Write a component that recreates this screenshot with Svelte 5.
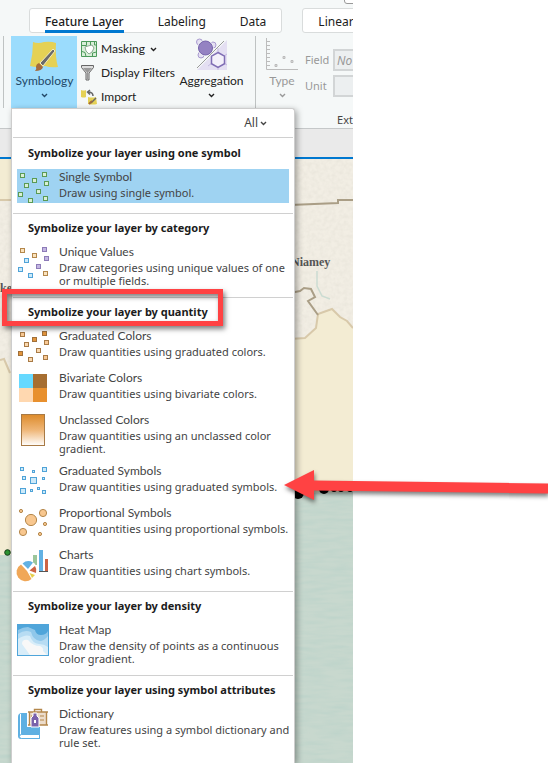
<script>
  const dots = [[5, 5], [27, 4], [17, 10], [29, 13], [9, 15], [21, 21], [3, 24], [28, 28], [13, 30]];
  const green = dots.map(() => ['#5a9a54', '#d9efd5']);
  const tan = ['#b4874b', '#fbe3bd'];
  const violet = ['#8d7bb8', '#c3b6e2'];
  const blue = ['#4fa3d8', '#cdeaf9'];
  const light = ['#a87a45', '#fbd9b0'];
  const mid = ['#a87a45', '#f9c995'];
  const dark = ['#a0703a', '#e3953d'];
  const dotColors = {
    single: green,
    unique: [tan, violet, tan, violet, blue, violet, blue, tan, blue],
    graduated: [mid, dark, dark, mid, light, light, dark, mid, light]
  };
  const squares = [[3, 2, 3], [15, 5, 2], [25, 2, 4], [5, 11, 3], [13, 12, 6], [25, 12, 2], [3, 23, 5], [13, 24, 2], [20, 22, 2], [25, 25, 3]];
  const circles = [[4, 4, 1.6], [26, 6, 3.6], [14, 13, 5.6], [28, 17, 1.6], [6, 25, 3.6], [23, 27, 1.6]];

  const sections = [
    { title: 'Symbolize your layer using one symbol', items: [
      { icon: 'single', name: 'Single Symbol', text: 'Draw using single symbol.', selected: true }
    ] },
    { title: 'Symbolize your layer by category', items: [
      { icon: 'unique', name: 'Unique Values', text: 'Draw categories using unique values of one or multiple fields.' }
    ] },
    { title: 'Symbolize your layer by quantity', items: [
      { icon: 'graduated', name: 'Graduated Colors', text: 'Draw quantities using graduated colors.' },
      { icon: 'bivariate', name: 'Bivariate Colors', text: 'Draw quantities using bivariate colors.' },
      { icon: 'unclassed', name: 'Unclassed Colors', text: 'Draw quantities using an unclassed color gradient.' },
      { icon: 'symbols', name: 'Graduated Symbols', text: 'Draw quantities using graduated symbols.' },
      { icon: 'proportional', name: 'Proportional Symbols', text: 'Draw quantities using proportional symbols.' },
      { icon: 'charts', name: 'Charts', text: 'Draw quantities using chart symbols.' }
    ] },
    { title: 'Symbolize your layer by density', items: [
      { icon: 'heat', name: 'Heat Map', text: 'Draw the density of points as a continuous color gradient.' }
    ] },
    { title: 'Symbolize your layer using symbol attributes', items: [
      { icon: 'dictionary', name: 'Dictionary', text: 'Draw features using a symbol dictionary and rule set.' }
    ] }
  ];
</script>

{#snippet chevron()}
  <svg class="chevron" viewBox="0 0 7 5" width="7" height="5"><path d="M1 1l2.5 2.5L6 1" fill="none" stroke="currentColor" stroke-width="1.4" /></svg>
{/snippet}

{#snippet itemIcon(kind)}
  <svg class="icon" viewBox="0 0 32 32" width="32" height="32">
    {#if dotColors[kind]}
      {#each dots as [x, y], i}
        <rect x={x - 1.5} y={y - 2.5} width="4" height="4" fill={dotColors[kind][i][1]} stroke={dotColors[kind][i][0]} />
      {/each}
    {:else if kind === 'bivariate'}
      <path fill="#66d9ff" d="M2 2h14v14H2z" /><path fill="#a66e31" d="M16 2h14v14H16z" />
      <path fill="#ffd8b0" d="M2 16h14v14H2z" /><path fill="#e8902e" d="M16 16h14v14H16z" />
    {:else if kind === 'unclassed'}
      <defs><linearGradient id="fade" x2="0" y2="1"><stop stop-color="#dd8b2b" /><stop offset=".5" stop-color="#efb677" /><stop offset="1" stop-color="#fff" /></linearGradient></defs>
      <rect x="4.5" y="0.5" width="23" height="31" fill="url(#fade)" stroke="#a87a45" />
    {:else if kind === 'symbols'}
      {#each squares as [x, y, s]}
        <rect x={x + 0.5} y={y + 0.5} width={s} height={s} fill="#cdeaf9" stroke="#4fa3d8" />
      {/each}
    {:else if kind === 'proportional'}
      {#each circles as [x, y, r]}
        <circle cx={x} cy={y} {r} fill="#f8c78f" stroke="#b4874b" stroke-width="1" />
      {/each}
    {:else if kind === 'charts'}
      <path fill="#9cc69b" d="M16 6h4v10h-4z" /><path fill="#62b1e3" d="M22 1h4v21h-4z" /><path fill="#cd6444" d="M28 10h3v12h-3z" />
      <path d="M22 22.5h9" stroke="#555" />
      <circle cx="10.500" cy="21.500" r="10" fill="#fff" />
      <path fill="#f0a757" d="M10 22L4 15.500A9 9 0 1 0 14.500 30z" />
      <path fill="#62b1e3" d="M11 20L5.500 14.500a9 9 0 0 1 10.500-1z" />
      <path fill="#cd6444" d="M12.500 21.500l5.500-4.500a8 8 0 0 1 1 7z" />
      <path fill="#e6cf4a" d="M12.500 24l5.500 2-3 3z" />
    {:else if kind === 'heat'}
      <path fill="#4fa5da" d="M0 0h32v32H0z" />
      <path fill="#8fc7ea" d="M1 6q5-3 10-3l7 3q1 5 6 5t7-4v24H1z" />
      <path fill="#b7dcf3" d="M1 10q7-5 13-2 2 8 9 9 4 0 8-5v19H1z" />
      <path fill="#d8edf9" d="M1 15q7-5 12-3 2 7 9 8 5 0 9 3v8H1z" />
      <path fill="#f8f8f8" d="M5 20q0-5 6-4 5 6 12 6 4 2 3 5l4 4H13z" />
    {:else}
      <path fill="#5fb0e2" d="M1 9q0-4 4-4h18v26H4q-3 0-3-3z" /><path d="M3.500 6v22" stroke="#fff" />
      <path fill="#fff" stroke="#5fb0e2" d="M5 26.500h17.500v4H4.500q-2 0-2-2 0-2 2-2z" />
      <path fill="#fff" d="M10 2h22v17H10z" />
      <path fill="#ecdccb" d="M12 4h18v13H12z" />
      <path fill="none" stroke="#b4874b" stroke-width="1.400" d="M11 4h20M11 17h20M12.500 4v13M29.500 4v13M17.500 3.500v-2h7v2" />
      <path stroke="#b4874b" d="M23 8h4M23 12h4M14 8h1" />
      <path fill="#7a62ab" stroke="#fff" d="M16 5h4v3l2 2v9h-8v-9l2-2z" /><path fill="#fff" d="M17 12h2v3h-2z" />
    {/if}
  </svg>
{/snippet}

<main class="page">
  <div class="app">
    <div class="ribbon">
      <nav class="tabs">
        <div class="tab-set">
          <a class="tab active" href="#feature-layer">Feature Layer</a>
          <a class="tab" href="#labeling">Labeling</a>
          <a class="tab" href="#data">Data</a>
        </div>
        <div class="tab-set next"><a class="tab" href="#linear">Linear</a></div>
        <span class="frame"></span>
      </nav>
      <div class="tools">
        <button class="big symbology">
          <svg viewBox="0 0 32 32" width="32" height="32">
            <path fill="#e5d155" d="M4 1q5 2 11 0 7-1 12 1-1 14 2 24-7 1-13-1-8 2-15 0 3-12 3-24z" />
            <path fill="#a56b3d" d="M10 22l4 4q-1 4-8 4 2-2 1-4 0-3 3-4z" />
            <path d="M11 22L24 8l2 2-12 15z" fill="#6b6b6b" stroke="#f3ecc0" />
          </svg>
          <span>Symbology</span>{@render chevron()}
        </button>
        <div class="stack">
          <button class="small">
            <svg viewBox="0 0 16 16" width="16" height="16"><path fill="#d9eed9" stroke="#4c9a5b" d="M.5.500h15v15H.500z" /><path fill="none" stroke="#4c9a5b" d="M5.500 1v3.500H1M9.500 1v3M13.500 1v3h2M1 10.500l3 1 1 4M11.500 15v-3l4-1" /><path fill="#fff" stroke="#8aa890" d="M4 6l3-1 4-1 2 3-2 4-3 2-3-3z" /></svg>
            <span>Masking</span>{@render chevron()}
          </button>
          <button class="small">
            <svg viewBox="0 0 16 16" width="16" height="16"><path fill="#ddd" stroke="#666" d="M.500.500h12v2L8 8v7H5V8L.500 2.500z" /><path fill="#999" d="M2 3h9L7 7.500V14H6V7.500z" /></svg>
            <span>Display Filters</span>
          </button>
          <button class="small">
            <svg viewBox="0 0 16 16" width="16" height="16"><path fill="#e5d155" d="M0 1q3 1 5 0v7q-2 1-5 0zM7 8q4 1 8 0l1 7q-4 1-9 0z" /><path d="M10 14l5-5" stroke="#666" stroke-width="1.500" /><path d="M8 15l3-3" stroke="#a56b3d" stroke-width="2" /><path fill="none" stroke="#666" stroke-width="1.500" d="M12 7q0-4-5-4M9 1L6.500 3 9 5.500" /></svg>
            <span>Import</span>
          </button>
        </div>
        <button class="big aggregation">
          <svg viewBox="0 0 32 32" width="32" height="32">
            <path fill="#e4dff2" d="M31 2v30H1z" />
            <path fill="none" stroke="#c5bbe0" d="M22 14v-4M16 25l-4 3M22 29v3M28 18l3-2M28 25l3 2" />
            <g fill="#e4dff2" stroke="#a99bd0"><circle cx="3.500" cy="4" r="3" /><circle cx="17" cy="7" r="3" /><circle cx="5" cy="17" r="3" /></g>
            <circle cx="9.500" cy="10" r="8" fill="#f5f8f8" /><circle cx="9.500" cy="10" r="7" fill="#9482c2" stroke="#7562ab" />
            <path d="M1 30L28 3" stroke="#999" />
            <path fill="#f3f0fa" stroke="#7f6db4" stroke-width="1.500" d="M22 14.500l6.500 3.700v7.500L22 29.500l-6.500-3.800v-7.500z" />
          </svg>
          <span>Aggregation</span>{@render chevron()}
        </button>
        <button class="big type" disabled>
          <svg viewBox="0 0 32 32" width="32" height="32"><path fill="none" stroke="#bcbcbc" d="M.500 0v31.500H32M1 3.500h3M1 7.500h3M1 11.500h3M1 15.500h3M1 19.500h3M1 23.500h3M1 27.500h3" /><path fill="#ddd" stroke="#bbb" d="M9 26.500h2v2H9zM17 18.500h2v2h-2zM25 22.500h2v2h-2z" /></svg>
          <span>Type</span>{@render chevron()}
        </button>
        <div class="fields">
          <label><span>Field</span><input value="No" disabled /></label>
          <label><span>Unit</span><input disabled /></label>
        </div>
      </div>
    </div>

    <div class="below">
      <div class="workspace">
        <div class="group-name"><span>Ext</span></div>
        <div class="gutter"></div>
        <div class="map">
          <svg class="terrain" viewBox="0 0 353 604" preserveAspectRatio="xMinYMin slice">
            <defs>
              <filter id="paper" x="0" y="0" width="100%" height="100%"><feTurbulence type="fractalNoise" baseFrequency=".25" numOctaves="2" /><feColorMatrix values="0 0 0 0 .5  0 0 0 0 .48  0 0 0 0 .42  .25 0 0 0 -.08" /><feComposite in2="SourceGraphic" operator="in" /></filter>
              <filter id="waves" x="0" y="0" width="100%" height="100%"><feTurbulence type="fractalNoise" baseFrequency=".04 .25" numOctaves="2" /><feColorMatrix values="0 0 0 0 .4  0 0 0 0 .6  0 0 0 0 .55  .6 0 0 0 -.2" /><feComposite in2="SourceGraphic" operator="in" /></filter>
            </defs>
            <path fill="#f2eee4" d="M0 0h353v400H0z" />
            <path filter="url(#paper)" d="M0 0h353v400H0z" />
            <path fill="#f3ecd3" d="M0 0h12v41H0zM0 201l6 2 6 13v180H0zM290 180l15-1 11-10 2-14 14-5 8 8 7 4 6 7v170h-63z" />
            <path fill="none" stroke="#d8c9aa" stroke-width="2" d="M0 41h12M0 201l4-1 6 14M290 180l15-1 11-10 2-14 14-5 8 8 7 4 6 7" />
            <path fill="none" stroke="#aa9e86" stroke-width="2" d="M290 46l48-2v-3h15M290 134l10-2 4-3 7 1 4 8-7 4 10 14" />
            <path fill="none" stroke="#cbdcd2" stroke-width="1.500" d="M317 112v15l5 10 8 3" />
            <path fill="#c8d8ce" d="M0 396h12l278-62 63-1v271H0z" /><path filter="url(#waves)" d="M0 396h12l278-62 63-1v271H0z" />
            <circle cx="7.500" cy="393.500" r="2.800" fill="#2e9432" stroke="#173b18" />
            <g><circle cx="298" cy="334" r="6" /><circle cx="324" cy="330" r="5" /><circle cx="334" cy="330" r="3" /><circle cx="341" cy="330" r="3" /><circle cx="350" cy="330" r="3" /></g>
            <text class="place" x="291" y="107">Niamey</text>
            <text class="place" x="0" y="133">ke</text>
          </svg>
        </div>
      </div>

      <div class="menu">
        <div class="filter"><button>All {@render chevron()}</button></div>
        {#each sections as section}
          <section>
            <h2>{section.title}</h2>
            <div class="items">
              {#each section.items as item}
                <button class="item" class:selected={item.selected}>
                  {@render itemIcon(item.icon)}
                  <span class="copy"><span class="name">{item.name}</span><span class="text">{item.text}</span></span>
                </button>
              {/each}
            </div>
          </section>
        {/each}
      </div>
    </div>
  </div>

  <div class="box"></div>
  <svg class="arrow" viewBox="0 0 264 40" width="264" height="40"><path fill="#ff4243" d="M0 20L30 5v10.500l234 3v10l-234-3V35z" /></svg>
</main>

<style>
  :global(body) { background: #fff; }
  * { box-sizing: border-box; }
  .page { position: relative; min-height: 100vh; display: grid; grid-template-columns: minmax(0, 353px) 1fr; overflow: hidden; font: 12px/16px "Noto Sans", "Open Sans", sans-serif; color: #222; }
  .app { display: flex; flex-direction: column; min-width: 0; overflow: hidden; }
  button, input { font: inherit; color: inherit; }
  button { border: 0; padding: 0; background: none; text-align: left; }
  svg { display: block; flex: none; }
  .ribbon { background: #f5f8f8; height: 108px; flex: none; }
  .tabs { position: relative; display: flex; gap: 20px; padding: 8px 0 0 29px; }
  .tab-set { display: flex; flex: none; gap: 34px; height: 25px; padding: 0 15px; background: #fff; border: 1px solid #d9dcdc; border-radius: 3px; }
  .tab-set.next { padding-right: 40px; }
  .tab { color: #1c1c1c; text-decoration: none; line-height: 25px; height: 25px; white-space: nowrap; font-size: 12px; }
  .tab.active { height: 24px; border-bottom: 3px solid #0078d0; font-weight: 500; }
  .frame { position: absolute; left: 344px; top: -5px; width: 20px; height: 9px; border: 1px solid #999; border-radius: 3px; background: #fff; }
  .tools { display: flex; align-items: flex-start; padding: 3px 0 0 3px; height: 75px; }
  .big { display: flex; flex-direction: column; align-items: center; height: 72px; flex: none; font-family: Lato, sans-serif; font-size: 12px; }
  .big span { line-height: 16px; margin: 0 0 4px; }
  .symbology { width: 74px; padding: 5px 0 0 8px; border-left: 1px solid #bfc3c3; background: linear-gradient(#9bdcfd, #9bdcfd) 7px 0 / 66px 72px no-repeat; color: #234968; }
  .stack { display: flex; flex-direction: column; padding: 1px 0 0 4px; width: 98px; flex: none; font-family: Lato, sans-serif; }
  .small { display: flex; align-items: center; gap: 4px; height: 24px; white-space: nowrap; }
  .small .chevron { margin-left: 1px; }
  .aggregation { width: 81px; padding: 2px 7px 0 0; border-right: 1px solid #bfc3c3; }
  .aggregation span, .type span { margin-top: 3px; }
  .type { width: 46px; padding: 2px 0 0 6px; color: #999; }
  .fields { display: flex; flex-direction: column; gap: 4px; padding: 13px 0 0 3px; color: #999; }
  .fields label { display: flex; align-items: center; gap: 3px; }
  .fields span { width: 25px; font-size: 11px; }
  .fields input { width: 80px; height: 22px; border: 2px solid #d2d5d6; background: #eceff0; padding: 0 2px; font-style: italic; color: #999; }
  .below { display: grid; flex: 1; grid-template-columns: 12px minmax(0, 283px) 1fr; }
  .workspace { grid-area: 1 / 1 / 2 / 4; display: flex; flex-direction: column; min-width: 0; }
  .group-name { height: 21px; background: #f5f8f8; border-bottom: 1px solid #c5c8c9; display: flex; justify-content: flex-end; font-size: 11px; line-height: 23px; color: #444; }
  .gutter { height: 30px; background: #eaeaea; border-bottom: 2px solid #0078d0; }
  .map { flex: 1; position: relative; overflow: hidden; background: #c8d8ce; }
  .terrain { position: absolute; inset: 0; width: 100%; height: 100%; }
  .place { font: bold 12px "Liberation Serif", serif; fill: #555; }
  .menu { grid-area: 1 / 2; z-index: 1; background: #fff; border: 1px solid #cdcdcd; border-width: 1px 1px 0; border-radius: 0 3px 0 0; margin-left: -1px; box-shadow: 2px 2px 6px rgb(0 0 0 / .35); padding: 0 1px; }
  .filter { display: flex; justify-content: flex-end; height: 29px; border-bottom: 1px solid #d0d0d0; padding-right: 26px; margin-bottom: 1px; }
  .filter button { display: flex; align-items: center; gap: 2px; color: #444; }
  section + section { border-top: 1px solid #d0d0d0; }
  h2 { margin: 0; padding: 0 0 2px 15px; font-size: 11px; font-weight: 700; line-height: 28px; color: #1c1c1c; white-space: nowrap; }
  .items { display: flex; flex-direction: column; gap: 8px; padding: 0 4px 10px; }
  .item { display: flex; gap: 10px; min-height: 34px; align-items: flex-start; color: #444; white-space: normal; }
  .item.selected { background: #9fd3f2; }
  .icon { margin-top: 2px; overflow: visible; }
  .copy { display: flex; flex-direction: column; margin-right: -2px; }
  .name { font-family: Lato, sans-serif; font-size: 12px; line-height: 15px; padding-bottom: 2px; }
  .text { font-size: 11px; line-height: 13px; }
  .box { position: absolute; left: 2px; top: 289px; width: 221px; height: 37px; z-index: 2; border: 5px solid #ff4243; box-shadow: 2px 3px 5px rgb(0 0 0 / .5), inset 2px 3px 5px rgb(0 0 0 / .5); pointer-events: none; }
  .arrow { position: absolute; left: 284px; top: 465px; z-index: 2; filter: drop-shadow(1px 3px 2px rgb(0 0 0 / .5)); pointer-events: none; }
</style>
